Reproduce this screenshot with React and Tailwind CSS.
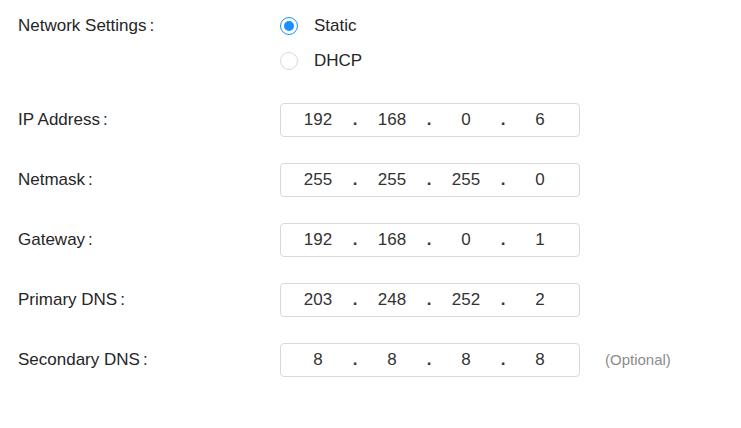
import { useState } from 'react'

const rows = [
  { label: 'IP Address', value: ['192', '168', '0', '6'] },
  { label: 'Netmask', value: ['255', '255', '255', '0'] },
  { label: 'Gateway', value: ['192', '168', '0', '1'] },
  { label: 'Primary DNS', value: ['203', '248', '252', '2'] },
  { label: 'Secondary DNS', value: ['8', '8', '8', '8'], optional: true },
]

function Label({ children }) {
  return (
    <div className="flex w-[262px] shrink-0 items-center">
      <span>{children}</span>
      <span className="ml-[3px]">:</span>
    </div>
  )
}

function Radio({ checked, label, onClick }) {
  return (
    <div className="flex h-[35px] cursor-pointer items-center" onClick={onClick}>
      <span
        className={`flex h-[18px] w-[18px] items-center justify-center rounded-full border bg-white ${
          checked ? 'border-[#1890ff]' : 'border-[#d9d9d9]'
        }`}
      >
        {checked && <span className="h-[10px] w-[10px] rounded-full bg-[#1890ff]" />}
      </span>
      <span className="ml-[16px]">{label}</span>
    </div>
  )
}

function IpInput({ value }) {
  return (
    <div className="flex h-[34px] w-[300px] items-center rounded-[4px] border border-[#d9d9d9] bg-white pr-[2px] text-[#333]">
      {value.map((part, i) => (
        <div key={i} className="flex flex-1 items-center">
          <span className="flex-1 text-center">{part}</span>
          {i < 3 && (
            <span className="flex w-0 justify-center font-bold">.</span>
          )}
        </div>
      ))}
    </div>
  )
}

export default function App() {
  const [mode, setMode] = useState('static')

  return (
    <div className="min-h-[428px] bg-white pl-[18px] pt-[8px] text-[17px] text-[#262626] [font-family:'Liberation_Sans',Arial,sans-serif]">
      <div className="flex">
        <div className="flex h-[35px] w-[262px] items-center">
          <span>Network Settings</span>
          <span className="ml-[3px]">:</span>
        </div>
        <div className="flex flex-col">
          <Radio checked={mode === 'static'} label="Static" onClick={() => setMode('static')} />
          <Radio checked={mode === 'dhcp'} label="DHCP" onClick={() => setMode('dhcp')} />
        </div>
      </div>

      <div className="mt-[25px] flex flex-col gap-[26px]">
        {rows.map((row) => (
          <div key={row.label} className="flex items-center">
            <Label>{row.label}</Label>
            <IpInput value={row.value} />
            {row.optional && (
              <span className="ml-[25px] text-[15px] text-[#8c8c8c]">(Optional)</span>
            )}
          </div>
        ))}
      </div>
    </div>
  )
}
